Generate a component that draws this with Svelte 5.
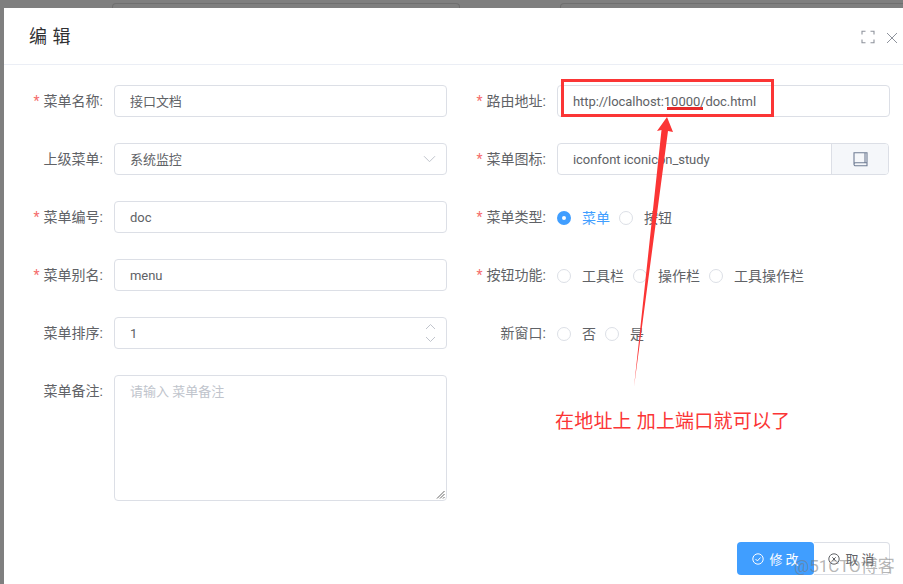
<script>
  const cols = [
    [
      { label: '菜单名称', req: true, kind: 'text', value: '接口文档' },
      { label: '上级菜单', kind: 'select', value: '系统监控' },
      { label: '菜单编号', req: true, kind: 'text', value: 'doc' },
      { label: '菜单别名', req: true, kind: 'text', value: 'menu' },
      { label: '菜单排序', kind: 'number', value: '1' },
      { label: '菜单备注', kind: 'area', value: '请输入 菜单备注' }
    ],
    [
      { label: '路由地址', req: true, kind: 'text', value: 'http://localhost:10000/doc.html' },
      { label: '菜单图标', req: true, kind: 'icon', value: 'iconfont iconicon_study' },
      { label: '菜单类型', req: true, kind: 'radio', options: [['菜单', true], ['按钮', false]] },
      { label: '按钮功能', req: true, kind: 'radio', options: [['工具栏', false], ['操作栏', false], ['工具操作栏', false]] },
      { label: '新窗口', kind: 'radio', options: [['否', false], ['是', false]] }
    ]
  ];
</script>

<div class="page">
  <div class="behind">
    <div class="ghost g1"></div>
    <div class="ghost g3"></div>
  </div>
  <div class="dialog">
    <header>
      <h2>编 辑</h2>
      <div class="tools">
        <svg width="14" height="14" viewBox="0 0 14 14" fill="none" stroke="#8e939c" stroke-width="1.1">
          <path d="M1 4.5V1.2h3.5M9.5 1.2H13v3.3M13 9.5v3.3H9.5M4.5 12.8H1V9.5" />
        </svg>
        <svg class="close" width="12" height="12" viewBox="0 0 12 12" fill="none" stroke="#8e939c" stroke-width="1">
          <path d="M1 1l10 10M11 1L1 11" />
        </svg>
      </div>
    </header>
    <div class="form">
      {#each cols as col}
        <div class="col">
          {#each col as f}
            <div class="row">
              <div class="label">
                {#if f.req}<span class="star">*</span>{/if}{f.label}:
              </div>
              {#if f.kind === 'radio'}
                <div class="radios">
                  {#each f.options as o}
                    <span class="radio" class:on={o[1]}>
                      <i></i><em>{o[0]}</em>
                    </span>
                  {/each}
                </div>
              {:else if f.kind === 'icon'}
                <div class="box group">
                  <span class="val">{f.value}</span>
                  <span class="append">
                    <svg width="15" height="15" viewBox="0 0 15 15" fill="none" stroke="#6f7d94" stroke-width="1.1">
                      <path d="M1 12.5V.8h13v13H2.5A1.5 1.5 0 0 1 1 12.3a1.5 1.5 0 0 1 1.5-1.5H14M12 .8v10" />
                    </svg>
                  </span>
                </div>
              {:else if f.kind === 'area'}
                <div class="box area">
                  <span class="placeholder">{f.value}</span>
                  <svg class="grip" width="9" height="9" viewBox="0 0 9 9" stroke="#555" stroke-width="0.9">
                    <path d="M1 8.5L8.5 1M4 8.5L8.5 4M7 8.5L8.5 7" />
                  </svg>
                </div>
              {:else}
                <div class="box">
                  <span class="val">{f.value}</span>
                  {#if f.kind === 'select'}
                    <svg class="chev" width="13" height="8" viewBox="0 0 13 8" fill="none" stroke="#c0c4cc" stroke-width="1">
                      <path d="M1 1.2l5.5 5.5L12 1.2" />
                    </svg>
                  {/if}
                  {#if f.kind === 'number'}
                    <span class="spin">
                      <svg width="11" height="7" viewBox="0 0 11 7" fill="none" stroke="#c0c4cc" stroke-width="1"><path d="M1 6l4.5-4.5L10 6" /></svg>
                      <svg width="11" height="7" viewBox="0 0 11 7" fill="none" stroke="#c0c4cc" stroke-width="1"><path d="M1 1l4.5 4.5L10 1" /></svg>
                    </span>
                  {/if}
                </div>
              {/if}
            </div>
          {/each}
        </div>
      {/each}
    </div>
    <footer>
      <span class="btn primary">
        <svg width="12" height="12" viewBox="0 0 12 12" fill="none" stroke="#fff" stroke-width="1"><circle cx="6" cy="6" r="5.2" /><path d="M3.5 6l1.9 1.9 3.2-3.4" /></svg>
        修 改
      </span>
      <span class="btn">
        <svg width="12" height="12" viewBox="0 0 12 12" fill="none" stroke="#606266" stroke-width="1"><circle cx="6" cy="6" r="5.2" /><path d="M4.3 4.3l3.4 3.4M7.7 4.3l-3.4 3.4" /></svg>
        取 消
      </span>
    </footer>
  </div>

  <div class="mark-box"></div>
  <div class="mark-line"></div>
  <svg class="arrow" width="50" height="280" viewBox="0 0 50 280">
    <path d="M37 1L43 16L38 15L4 271L31.5 14L27 15Z" fill="#fb3535" />
  </svg>
  <div class="note">在地址上 加上端口就可以了</div>
  <div class="watermark">@51CTO博客</div>
</div>

<style>
  :global(body) {
    margin: 0;
    background: #7f7f7f;
    overflow: hidden;
  }
  .page {
    position: relative;
    width: 903px;
    height: 584px;
    overflow: hidden;
    font-family: Roboto, "Noto Sans CJK SC", sans-serif;
    font-size: 13px;
    color: #606266;
    background: #7f7f7f;
  }
  .behind {
    height: 8px;
    display: flex;
  }
  .ghost {
    flex: none;
    height: 5px;
    margin-top: 3px;
    border: 1px solid #6f6f6f;
    border-bottom: 0;
    border-radius: 4px 4px 0 0;
    box-sizing: border-box;
  }
  .g1 { width: 348px; margin-left: 112px; }
  .g3 { width: 400px; margin-left: 100px; }
  .dialog {
    margin-left: 4px;
    height: 576px;
    background: #fff;
  }
  header {
    height: 57px;
    box-sizing: border-box;
    border-bottom: 1px solid #ebeef5;
    display: flex;
    align-items: center;
    justify-content: space-between;
    padding: 1px 5px 0 25px;
  }
  h2 {
    margin: 0;
    font-size: 18px;
    font-weight: 400;
    color: #303133;
    line-height: 24px;
    word-spacing: 1px;
  }
  .tools {
    display: flex;
    align-items: center;
    gap: 11px;
  }
  .close {
    margin-top: 2px;
  }
  .form {
    display: flex;
    padding-top: 20px;
  }
  .col {
    width: 443px;
    flex: none;
  }
  .row {
    display: flex;
    margin-bottom: 26px;
    min-height: 32px;
  }
  .label {
    width: 110px;
    flex: none;
    box-sizing: border-box;
    padding-right: 11px;
    text-align: right;
    font-size: 14px;
    line-height: 32px;
    white-space: nowrap;
  }
  .star {
    color: #f56c6c;
    margin-right: 4px;
  }
  .box {
    position: relative;
    flex: 1;
    height: 32px;
    box-sizing: border-box;
    border: 1px solid #dcdfe6;
    border-radius: 4px;
    padding: 0 15px;
    display: flex;
    align-items: center;
    justify-content: space-between;
    background: #fff;
  }
  .val {
    white-space: nowrap;
    line-height: 30px;
    padding-top: 1px;
    letter-spacing: -0.05px;
  }
  .group {
    padding-right: 0;
    overflow: hidden;
    margin-right: 1px;
  }
  .append {
    width: 57px;
    height: 30px;
    flex: none;
    box-sizing: border-box;
    background: #f5f7fa;
    border-left: 1px solid #dcdfe6;
    display: flex;
    align-items: center;
    justify-content: center;
  }
  .chev {
    margin-right: -5px;
  }
  .spin {
    display: flex;
    flex-direction: column;
    gap: 6px;
    margin-right: -5px;
  }
  .spin svg { display: block; }
  .area {
    height: 126px;
    align-items: flex-start;
    padding-top: 5px;
  }
  .placeholder {
    color: #c0c4cc;
    line-height: 21px;
  }
  .grip {
    position: absolute;
    right: 1px;
    bottom: 1px;
  }
  .radios {
    display: flex;
    align-items: center;
    height: 32px;
    gap: 9px;
    font-size: 14px;
  }
  .radio {
    display: flex;
    align-items: center;
    gap: 11px;
  }
  .radio i {
    width: 14px;
    height: 14px;
    margin-top: 2px;
    box-sizing: border-box;
    border: 1px solid #dcdfe6;
    border-radius: 50%;
    background: #fff;
  }
  .radio em {
    font-style: normal;
    white-space: nowrap;
  }
  .radio.on i {
    border: 5px solid #409eff;
  }
  .radio.on em {
    color: #409eff;
  }
  footer {
    position: absolute;
    left: 737px;
    top: 542px;
    display: flex;
  }
  .btn {
    height: 33px;
    width: 76px;
    box-sizing: border-box;
    border: 1px solid #dcdfe6;
    border-left: 0;
    border-radius: 0 4px 4px 0;
    display: flex;
    align-items: center;
    justify-content: center;
    gap: 5px;
    background: #fff;
  }
  .btn.primary {
    width: 77px;
    background: #409eff;
    border: 0;
    color: #fff;
    border-radius: 4px;
  }
  .mark-box {
    position: absolute;
    left: 561px;
    top: 79px;
    width: 213px;
    height: 38px;
    box-sizing: border-box;
    border: 3px solid #fb3535;
  }
  .mark-line {
    position: absolute;
    left: 667px;
    top: 107px;
    width: 36px;
    height: 3px;
    background: #e62b2b;
  }
  .arrow {
    position: absolute;
    left: 630px;
    top: 116px;
  }
  .note {
    position: absolute;
    left: 555px;
    top: 409px;
    font-size: 19px;
    line-height: 26px;
    color: #fb3535;
    white-space: nowrap;
    letter-spacing: 0.2px;
  }
  .watermark {
    position: absolute;
    left: 794px;
    top: 555px;
    font-size: 17px;
    line-height: 22px;
    color: rgba(120, 120, 120, 0.55);
    white-space: nowrap;
  }
</style>
